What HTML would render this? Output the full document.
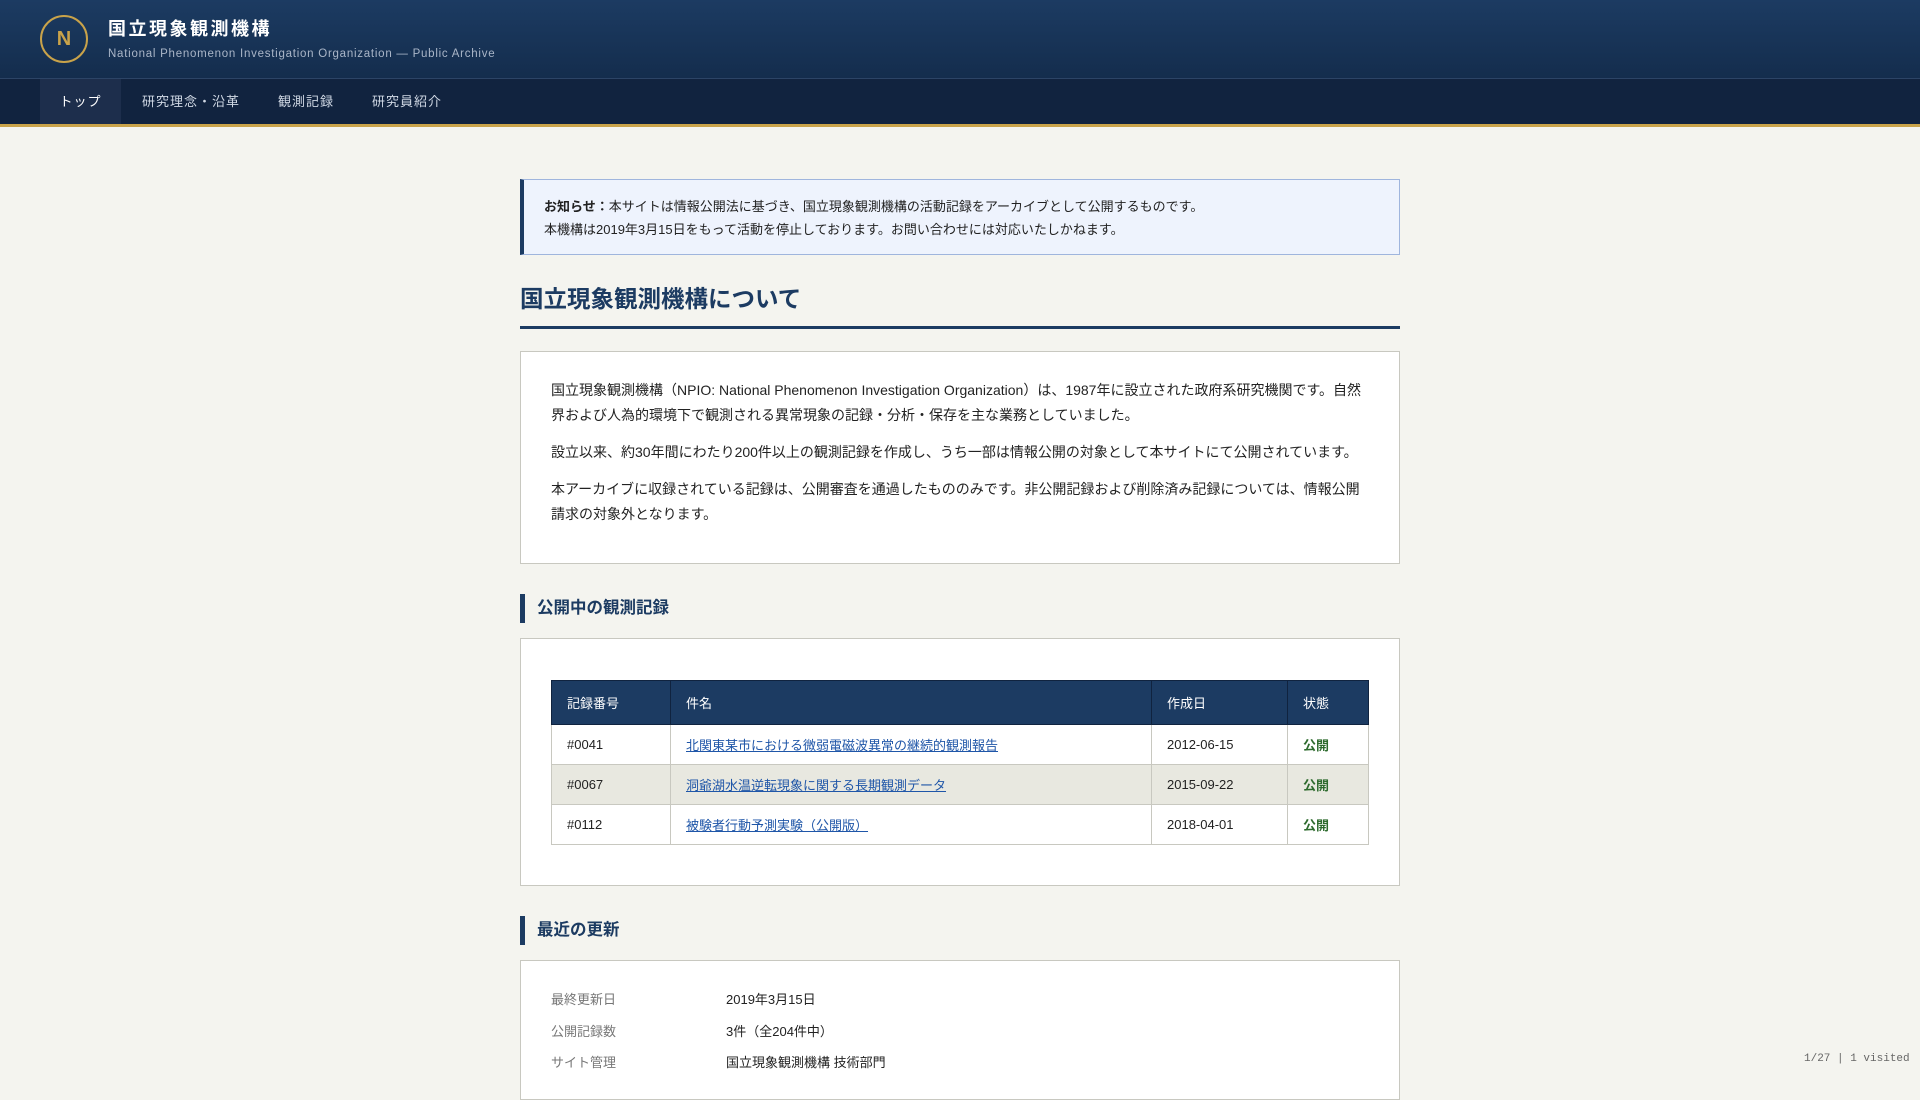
<!DOCTYPE html>
<html><head><meta charset="utf-8"><style>
*{margin:0;padding:0;box-sizing:border-box}
body{width:1920px;height:1080px;overflow:hidden;background:#f4f4ef;font-family:"Liberation Sans","Noto Sans CJK JP",sans-serif;color:#222;position:relative}
.hd{height:79px;background:linear-gradient(#1c3b62,#142d4d);position:relative;border-bottom:1px solid #2c4466}
.logo{position:absolute;left:40px;top:15px;width:48px;height:48px;border:2px solid #c9a34a;border-radius:50%;color:#c9a34a;font-weight:bold;font-size:20px;text-align:center;line-height:44px}
.t1{position:absolute;left:108px;top:15px;color:#fff;font-size:18px;font-weight:bold;letter-spacing:2.5px}
.t2{position:absolute;left:108px;top:48px;color:#aab6c8;font-size:11.5px;letter-spacing:.75px}
.nav{height:48px;background:#11233f;border-bottom:3px solid #c9a34a;position:relative}
.nav a{position:absolute;top:0;height:45px;line-height:45px;color:#d0d8e4;font-size:13px;text-decoration:none;letter-spacing:1px;white-space:nowrap}
.nav a.on{background:#1d2e4c;color:#fff;left:40px;width:81px;text-align:center}
.c{position:absolute;left:520px;width:880px}
.note{top:179px;height:76px;background:#eef3fd;border:1px solid #9fb5dd;border-left:4px solid #1c3b62;padding:15px 20px;font-size:13px;line-height:23px;color:#222}
.h1{top:280px;font-size:23.5px;font-weight:bold;color:#1c3b62;height:49px;border-bottom:3px solid #1c3b62}
.box{background:#fff;border:1px solid #c8c8c0}
.about{top:351px;height:213px;padding:26px 26px 25px 30px;font-size:14px;line-height:25px}
.about p{margin-bottom:12px}
.h2{height:29px;border-left:5px solid #1c3b62;padding-left:12px;font-size:16.5px;font-weight:bold;color:#1c3b62;line-height:29px}
table{position:absolute;left:30px;top:41px;width:818px;border-collapse:collapse;font-size:13px}
th{background:#1c3b62;color:#fff;font-weight:normal;text-align:left;height:44px;padding:0 15px;border:1px solid #10233f}
td{height:40px;padding:0 15px;border:1px solid #c8c8c0}
tr.alt td{background:#e8e8e0}
td a{color:#1f56a8;text-decoration:underline}
.ok{color:#2e6b2e;font-weight:bold}
.dl{position:absolute;left:30px;font-size:13px}
.dl span{position:absolute;white-space:nowrap}
.lab{color:#777;left:0}.val{left:175px;color:#222}
.ft{position:absolute;left:1804px;top:1053px;font-family:"Liberation Mono",monospace;font-size:11px;color:#666}
</style></head><body>
<div class="hd"><div class="logo">N</div><div class="t1">国立現象観測機構</div><div class="t2">National Phenomenon Investigation Organization — Public Archive</div></div>
<div class="nav"><a class="on">トップ</a><a style="left:142px">研究理念・沿革</a><a style="left:278px">観測記録</a><a style="left:372px">研究員紹介</a></div>
<div class="c note"><b>お知らせ：</b>本サイトは情報公開法に基づき、国立現象観測機構の活動記録をアーカイブとして公開するものです。<br>本機構は2019年3月15日をもって活動を停止しております。お問い合わせには対応いたしかねます。</div>
<div class="c h1">国立現象観測機構について</div>
<div class="c box about"><p>国立現象観測機構（NPIO: National Phenomenon Investigation Organization）は、1987年に設立された政府系研究機関です。自然界および人為的環境下で観測される異常現象の記録・分析・保存を主な業務としていました。</p><p>設立以来、約30年間にわたり200件以上の観測記録を作成し、うち一部は情報公開の対象として本サイトにて公開されています。</p><p>本アーカイブに収録されている記録は、公開審査を通過したもののみです。非公開記録および削除済み記録については、情報公開請求の対象外となります。</p></div>
<div class="c h2" style="top:594px">公開中の観測記録</div>
<div class="c box" style="top:638px;height:248px">
<table><tr><th style="width:119px">記録番号</th><th style="width:481px">件名</th><th style="width:136px">作成日</th><th>状態</th></tr>
<tr><td>#0041</td><td><a>北関東某市における微弱電磁波異常の継続的観測報告</a></td><td>2012-06-15</td><td class="ok">公開</td></tr>
<tr class="alt"><td>#0067</td><td><a>洞爺湖水温逆転現象に関する長期観測データ</a></td><td>2015-09-22</td><td class="ok">公開</td></tr>
<tr><td>#0112</td><td><a>被験者行動予測実験（公開版）</a></td><td>2018-04-01</td><td class="ok">公開</td></tr></table></div>
<div class="c h2" style="top:916px">最近の更新</div>
<div class="c box" style="top:960px;height:140px">
<div class="dl" style="top:28px"><span class="lab">最終更新日</span><span class="val">2019年3月15日</span></div>
<div class="dl" style="top:60px"><span class="lab">公開記録数</span><span class="val">3件（全204件中）</span></div>
<div class="dl" style="top:91px"><span class="lab">サイト管理</span><span class="val">国立現象観測機構 技術部門</span></div>
</div>
<div class="ft">1/27 | 1 visited</div>
</body></html>
